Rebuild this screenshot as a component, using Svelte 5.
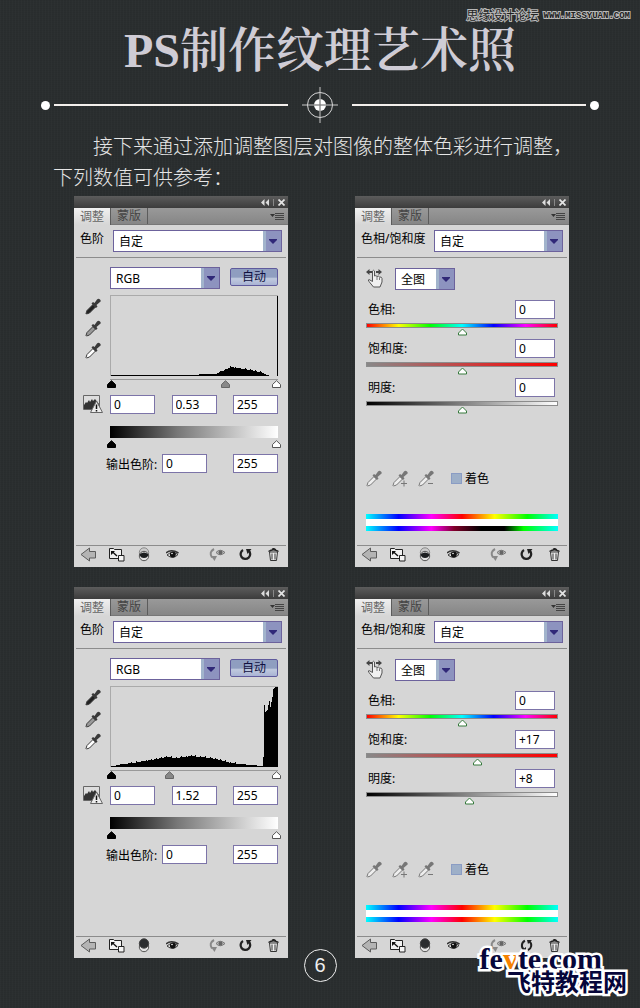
<script lang="ts">
  type Point = [number, number]

  let levels = $state([
    {
      id: 'levels-a', input: [0, 176, 255], gamma: '0.53', output: [0, 255], masked: false,
      curve: [[0, 1], [88, 1], [89, 2], [105, 2], [108, 3], [112, 5], [117, 7], [121, 9], [132, 7], [140, 6], [144, 5], [149, 4], [153, 3], [156, 1], [160, 0], [166, 0], [167, 80], [168, 80]] as Point[],
    },
    {
      id: 'levels-b', input: [0, 90, 255], gamma: '1.52', output: [0, 255], masked: true,
      curve: [[0, 1], [4, 1], [5, 2], [12, 3], [22, 4], [34, 6], [45, 8], [55, 10], [65, 9], [80, 11], [90, 10], [100, 9], [110, 7], [120, 4], [130, 3], [140, 2], [152, 1], [153, 10], [154, 62], [155, 55], [157, 57], [159, 66], [160, 60], [162, 70], [163, 78], [165, 80], [168, 80]] as Point[],
    },
  ])

  let hues = $state([
    { id: 'hue-a', masked: false, fields: [
      { name: '色相', kind: 'rainbow', value: 0, text: '0' },
      { name: '饱和度', kind: 'red', value: 0, text: '0' },
      { name: '明度', kind: 'grey', value: 0, text: '0' },
    ] },
    { id: 'hue-b', masked: true, fields: [
      { name: '色相', kind: 'rainbow', value: 0, text: '0' },
      { name: '饱和度', kind: 'red', value: 17, text: '+17' },
      { name: '明度', kind: 'grey', value: 8, text: '+8' },
    ] },
  ])

  // one-pixel columns with a little ripple where the curve has some body
  function histogram(points: Point[]) {
    let d = 'M0 80'
    for (let x = 0; x < 168; x++) {
      const i = points.findIndex((p) => p[0] > x)
      const [x0, y0] = points[i - 1]
      const [x1, y1] = points[i]
      let h = Math.round(y0 + ((y1 - y0) * (x - x0)) / (x1 - x0))
      if (h > 3 && h < 20) h += (x * 7) % 5 === 0 ? 1 : 0
      d += `V${80 - h}H${x + 1}`
    }
    return d + 'V80Z'
  }
</script>

{#snippet dropper(fill: string, body: string, mark = '')}
  <svg width="16" height="17" viewBox="0 0 16 17" aria-hidden="true">
    <path d="M1 15.5 2 12.5 8 6.5 10.500 9 4.500 15 1.500 16Z" fill={fill} stroke={body} />
    <path d="M6.500 5.500 8 4 9.500 5 12 1.500Q13.500 0 15 1.500T15 4L11.500 7 12.500 8.500 11 10Z" fill={body} />
    {#if mark}<path d={mark} stroke={body} fill="none" />{/if}
  </svg>
{/snippet}

{#snippet head()}
  <div class="titlebar">
    <button aria-label="collapse">
      <svg width="8" height="7" viewBox="0 0 8 7"><path d="M3.500 0V7L0 3.500ZM8 0V7L4.500 3.500Z" fill="#ddd" /></svg>
    </button>
    <span class="sep"></span>
    <button aria-label="close">
      <svg width="7" height="7" viewBox="0 0 7 7"><path d="M.5.5 6.500 6.500M6.500.5.5 6.500" stroke="#e4e4e4" stroke-width="1.700" /></svg>
    </button>
  </div>
  <div class="tabs">
    <button class="tab active">调整</button>
    <button class="tab">蒙版</button>
    <button class="menu" aria-label="menu">
      <svg width="14" height="9" viewBox="0 0 14 9"><path d="M0 2H5L2.500 5Z" fill="#333" /><path d="M5 1.500H14M5 3.500H14M5 5.500H14M5 7.500H14" stroke="#444" /></svg>
    </button>
  </div>
{/snippet}

{#snippet foot(masked: boolean, double: boolean)}
  <div class="foot">
    <button aria-label="back">
      <svg width="17" height="15" viewBox="0 0 17 15"><path d="M1 7.500 9.500 1V4.500H15.500V11H9.500V14Z" fill="#b4b4b4" stroke="#5c5c5c" /></svg>
    </button>
    <button aria-label="expand">
      <svg width="17" height="15" viewBox="0 0 17 15">
        <path d="M1.500 1.500H5.500L6.500 2.500H13.500V11.500H1.500Z" fill="#f2f2f2" stroke="#222" />
        <path d="M3 4H7L5.800 5.200 9.500 8.500 8.500 9.500 5 6.200 3 8Z" fill="#111" />
        <path d="M10.500 8.500H16V14H10.500Z" fill="#f4f4f4" stroke="#222" />
      </svg>
    </button>
    <button aria-label="clip">
      <svg width="12" height="15" viewBox="0 0 12 15">
        {#if masked}
          <circle cx="6" cy="9" r="4.700" fill="#e4e4e4" stroke="#555" />
          <circle cx="6" cy="5.500" r="4.700" fill="#2b2d2f" stroke="#444" />
        {:else}
          <circle cx="6" cy="5.500" r="4.700" fill="#ccc" stroke="#888" />
          <circle cx="6" cy="9" r="4.700" fill="#e4e4e4" stroke="#555" />
          <path d="M1.500 7.500Q6 3.500 10.500 7.500 9.500 11 6 11T1.500 7.500Z" fill="#1c1e20" />
        {/if}
      </svg>
    </button>
    <button aria-label="visibility">
      <svg width="13" height="11" viewBox="0 0 13 11">
        <path d="M0 4Q5-.5 12.500 4" stroke="#333" stroke-width="1.500" fill="none" />
        <path d="M1 6Q6 1.500 12 5.500 7 11 1 6Z" fill="#eee" stroke="#333" />
        <circle cx="6.800" cy="5.500" r="3" fill="#111" /><circle cx="6" cy="4.500" r=".8" fill="#fff" />
      </svg>
    </button>
    <span class="spring"></span>
    <button class="wide" aria-label="previous state">
      <svg width="17" height="14" viewBox="0 0 17 14">
        <path d="M5 1Q-.5 4 3 9.500" stroke="#888" stroke-width="2" fill="none" /><path d="M2 8H8L5.500 13Z" fill="#888" />
        <path d="M7 4.500Q11 0 16 4.500 11 9 7 4.500Z" fill="#bbb" stroke="#777" /><circle cx="11.500" cy="4.500" r="2" fill="#666" />
      </svg>
    </button>
    <button class="wide" aria-label="reset">
      <svg width="13" height="13" viewBox="0 0 13 13">
        {#if double}
          <path d="M5 1.800A5 5 0 0 0 4 10.500M8 11A5 5 0 0 0 9.500 2.500" stroke="#222" stroke-width="2" fill="none" /><path d="M1.500 11.500H6V8ZM7 1H12L8 5Z" fill="#222" />
        {:else}
          <path d="M4 2A4.800 4.800 0 1 0 9.500 2.500" stroke="#222" stroke-width="2.300" fill="none" /><path d="M7 1H12.500L8.500 6Z" fill="#222" />
        {/if}
      </svg>
    </button>
    <button class="wide" aria-label="delete">
      <svg width="11" height="13" viewBox="0 0 11 13">
        <path d="M1.500 4H9.500L8.500 12.500H2.500Z" fill="#eee" stroke="#333" /><path d="M4 5.500V11.500M7 5.500V11.500" stroke="#333" />
        <path d="M.5 3.500Q5.500 0 10.500 3.500M4 1.500 5.500.5 8 2" stroke="#222" stroke-width="1.500" fill="none" />
      </svg>
    </button>
  </div>
{/snippet}

{#snippet levelsPanel(p)}
  <section class="panel">
    {@render head()}
    <div class="preset">
      <label for="{p.id}-preset">色阶</label>
      <select id="{p.id}-preset"><option>自定</option></select>
    </div>
    <div class="body levels">
      <div></div>
      <div class="between">
        <select class="channel" aria-label="channel"><option>RGB</option></select>
        <button class="auto">自动</button>
      </div>

      <div class="droppers">
        {@render dropper('#222', '#3a3a3a')}
        {@render dropper('#999', '#3a3a3a')}
        {@render dropper('#fff', '#3a3a3a')}
      </div>
      <div class="graph">
        <svg class="histogram" viewBox="0 0 168 80" preserveAspectRatio="none" shape-rendering="crispEdges">
          <path d={histogram(p.curve)} />
        </svg>
        <div class="stops lined">
          <input class="stop black" type="range" max="255" aria-label="shadows" bind:value={p.input[0]} />
          <input class="stop mid" type="range" max="255" aria-label="midtones" bind:value={p.input[1]} />
          <input class="stop white" type="range" max="255" aria-label="highlights" bind:value={p.input[2]} />
        </div>
      </div>

      <svg class="warn" width="20" height="19" viewBox="0 0 20 19" aria-hidden="true">
        <path d="M.5.5H16.500V14.500H.5Z" fill="#ddd" stroke="#666" />
        <path d="M1 14V10L3 7 4 8 6 5 7 7 9 4 10 6 12 4 16 9V14Z" fill="#333" />
        <path d="M13.500 6 19.500 17.500H7.500Z" fill="#eee" stroke="#666" /><path d="M13.500 9.500V14M13.500 15V16.500" stroke="#111" stroke-width="1.500" />
      </svg>
      <div class="between numbers">
        <input type="text" aria-label="shadow input" bind:value={p.input[0]} />
        <input type="text" aria-label="gamma" bind:value={p.gamma} />
        <input type="text" aria-label="highlight input" bind:value={p.input[2]} />
      </div>

      <div></div>
      <div class="ramp-box">
        <div class="ramp"></div>
        <div class="stops">
          <input class="stop black" type="range" max="255" aria-label="output black" bind:value={p.output[0]} />
          <input class="stop white" type="range" max="255" aria-label="output white" bind:value={p.output[1]} />
        </div>
      </div>

      <div class="output">
        <label for="{p.id}-out">输出色阶:</label>
        <input id="{p.id}-out" type="text" bind:value={p.output[0]} />
        <span class="spring"></span>
        <input type="text" aria-label="output highlight" bind:value={p.output[1]} />
      </div>
    </div>
    {@render foot(p.masked, false)}
  </section>
{/snippet}

{#snippet huePanel(p)}
  <section class="panel">
    {@render head()}
    <div class="preset hue-preset">
      <label for="{p.id}-preset">色相/饱和度</label>
      <select id="{p.id}-preset"><option>自定</option></select>
    </div>
    <div class="body hue">
      <div class="range-row">
        <svg width="18" height="20" viewBox="0 0 18 20" aria-hidden="true">
          <path d="M0 4 3.500 1V3H6V5H3.500V7ZM16 4 12.500 1V3H10V5H12.500V7Z" fill="#444" />
          <path d="M6.500 11V3Q7.500 1.500 8.500 3V8Q10 7 11 8.500 12.500 7.500 13.500 9 15.500 8.500 16 10.500V14L14 19H7.500L3 13.500Q1.500 11.500 3 11.500L6.500 13.500Z" fill="#f0f0f0" stroke="#555" />
          <path d="M11 9V12M13.500 9.500V12" stroke="#777" />
        </svg>
        <select class="scope" aria-label="range"><option>全图</option></select>
      </div>
      {#each p.fields as f}
        <div class="field">
          <div class="between">
            <label for="{p.id}-{f.kind}">{f.name}:</label>
            <input id="{p.id}-{f.kind}" type="text" bind:value={f.text} />
          </div>
          <input class="slider {f.kind}" type="range" min="-100" max="100" aria-label={f.name} bind:value={f.value} />
        </div>
      {/each}
      <div class="tools">
        {@render dropper('#eee', '#777')}
        {@render dropper('#eee', '#777', 'M9 13.500H15M12 10.500V16.500')}
        {@render dropper('#eee', '#777', 'M10 13.500H15')}
        <label class="tint"><input type="checkbox" />着色</label>
      </div>
      <div class="spectrum"></div>
      <div class="spectrum second" class:dark={!p.masked}></div>
    </div>
    {@render foot(p.masked, p.masked)}
  </section>
{/snippet}

<main>
  <div class="forum"><span>思缘设计论坛</span> <small>WWW.MISSYUAN.COM</small></div>
  <h1>PS制作纹理艺术照</h1>
  <div class="rule">
    <i></i><b></b>
    <svg width="36" height="36" viewBox="0 0 36 36" aria-hidden="true">
      <circle cx="18" cy="18" r="12.500" fill="none" stroke="#d8d8d8" />
      <circle cx="18" cy="18" r="6" fill="#fff" />
      <path d="M18 0V36M0 18H36" stroke="#c8c8c8" />
      <path d="M18 12V24M12 18H24" stroke="#777" />
    </svg>
    <b></b><i></i>
  </div>
  <p>接下来通过添加调整图层对图像的整体色彩进行调整，下列数值可供参考：</p>

  <div class="panels">
    {#each levels as level, i}
      {@render levelsPanel(level)}
      {@render huePanel(hues[i])}
    {/each}
  </div>

  <div class="page">6</div>
  <div class="site">
    <div class="domain">fe<em>v</em>te.com</div>
    <div>飞特教程网</div>
  </div>
</main>

<style>
  :global(body) { background: #292d2e; }
  main {
    position: relative; overflow: hidden; padding-bottom: 26px;
    font-family: "Noto Sans", "Noto Sans CJK SC", sans-serif; font-size: 12px; color: #000;
    background: repeating-linear-gradient(90deg, #ffffff04 0 1px, transparent 1px 3px), repeating-linear-gradient(#0000000a 0 1px, transparent 1px 2px), #2a2e2f;
  }
  button { padding: 0; border: 0; background: none; font: inherit; cursor: pointer; }
  svg { display: block; flex: none; }
  input, select { box-sizing: border-box; margin: 0; font: inherit; color: #000; }

  h1 { margin: 0; padding-top: 16px; text-align: center; font: 600 48px/70px "Liberation Serif", "Noto Serif CJK SC", "Noto Sans CJK SC", serif; color: #cfccd5; }
  .rule { display: flex; align-items: center; gap: 4px; padding: 1px 41px 0; }
  .rule i { width: 9px; height: 9px; border-radius: 50%; background: #fff; }
  .rule b { flex: 1; height: 2px; background: #f3efec; }
  .rule svg { margin: 0 10px; }
  p { margin: 0; padding: 7px 60px 0 53px; text-indent: 2em; font: 300 20px/31px "Noto Sans CJK SC", sans-serif; color: #e6e6e6; }

  .panels { display: grid; grid-template-columns: 1fr 1fr; gap: 20px 67px; padding: 4px 71px 0 74px; }
  .panel { display: flex; flex-direction: column; background: #d6d6d6; }
  .titlebar { display: flex; align-items: center; justify-content: flex-end; gap: 4px; height: 12px; padding-right: 3px; background: linear-gradient(#5c5c5c, #3c3c3c); }
  .sep { width: 1px; height: 7px; background: #888; }
  .tabs { display: flex; height: 17px; background: linear-gradient(#999, #868686); border-bottom: 1px solid #777; box-sizing: border-box; }
  .tab { width: 37px; line-height: 16px; border-right: 1px solid #5c5c5c; color: #444; box-sizing: border-box; }
  .tab.active { height: 17px; background: linear-gradient(#f0f0f0, #d6d6d6); color: #666; }
  .menu { margin: 0 4px 0 auto; }

  .preset { display: flex; align-items: center; margin: 5px 2px 0; padding: 0 4px 5px; border-bottom: 1px solid #8c8c8c; }
  .preset label { width: 33px; line-height: 18px; align-self: flex-start; }
  .hue-preset label { width: 73px; }
  .preset select { flex: 1; min-width: 0; }
  select {
    height: 22px; padding: 0 20px 0 5px; appearance: none; border: 1px solid #6c629c; border-radius: 0;
    background:
      url("data:image/svg+xml,%3Csvg xmlns='http://www.w3.org/2000/svg' width='8' height='5'%3E%3Cpath d='M0 0H8V1L4 5 0 1Z' fill='%23302878'/%3E%3C/svg%3E") right 4px center no-repeat,
      linear-gradient(#8d93bf, #8d93bf) right / 15px 100% no-repeat,
      linear-gradient(#a2b4cc, #a2b4cc) right / 18px 100% no-repeat, #fff;
  }
  input[type='text'] { width: 45px; height: 19px; padding: 0 3px; border: 1px solid #7c74a8; background: #fff; }
  .between { display: flex; justify-content: space-between; }
  .spring { flex: 1; }

  .body { flex: 1; }
  .levels { display: grid; grid-template-columns: 27px 1fr; align-content: start; padding: 9px 10px 72px 9px; }
  .channel { width: 110px; }
  .auto { width: 48px; height: 18px; margin-top: 1px; border: 1px solid #5f5a9c; border-radius: 2px; line-height: 14px; background: linear-gradient(#8f9ec0 50%, #c0cade 60%, #a9b3d4); color: #101040; }
  .droppers { display: grid; align-content: start; gap: 5px; padding: 9px 2px; }
  .graph { margin-top: 6px; }
  .histogram { width: 100%; height: 81px; border: 1px solid #aaa; border-width: 1px 0 0 1px; box-sizing: border-box; }
  .stops { display: grid; margin: 1px -3px 0; }
  .lined { margin-top: 3px; background: linear-gradient(#999, #999) center top / calc(100% - 6px) 1px no-repeat; }
  .stop { grid-area: 1 / 1; width: 100%; height: 9px; appearance: none; background: none; pointer-events: none; }
  .stop::-webkit-slider-thumb { width: 9px; height: 9px; appearance: none; pointer-events: auto; background: no-repeat center bottom; }
  .black::-webkit-slider-thumb { background-image: url("data:image/svg+xml,%3Csvg xmlns='http://www.w3.org/2000/svg' width='9' height='8'%3E%3Cpath d='M4.500 .7 8.500 4.500V7.500H.5V4.500Z' fill='%23000' stroke='%23000'/%3E%3C/svg%3E"); }
  .mid::-webkit-slider-thumb { background-image: url("data:image/svg+xml,%3Csvg xmlns='http://www.w3.org/2000/svg' width='9' height='8'%3E%3Cpath d='M4.500 .7 8.500 4.500V7.500H.5V4.500Z' fill='%23888' stroke='%23666'/%3E%3C/svg%3E"); }
  .white::-webkit-slider-thumb { background-image: url("data:image/svg+xml,%3Csvg xmlns='http://www.w3.org/2000/svg' width='9' height='8'%3E%3Cpath d='M4.500 .7 8.500 4.500V7.500H.5V4.500Z' fill='%23fff' stroke='%23555'/%3E%3C/svg%3E"); }
  .warn, .numbers { margin-top: 7px; }
  .ramp-box { margin-top: 12px; }
  .ramp { height: 12px; background: linear-gradient(90deg, #000, #777 40%, #fff); }
  .output { grid-column: 1 / 3; display: flex; align-items: center; margin-top: 6px; padding-left: 23px; }
  .output label { width: 56px; white-space: nowrap; }

  .hue { padding: 10px 11px 14px; }
  .range-row { display: flex; gap: 11px; margin-bottom: 10px; }
  .scope { width: 60px; }
  .field { margin-bottom: 3px; }
  .field .between { padding: 0 3px 0 2px; }
  .field label { line-height: 19px; }
  .field input[type='text'] { width: 40px; }
  .slider { display: block; width: 100%; height: 13px; margin-top: 4px; appearance: none; background: linear-gradient(90deg, var(--ramp)) 1px 1px / calc(100% - 2px) 3px no-repeat, linear-gradient(#8c8c8c, #8c8c8c) 0 0 / 100% 5px no-repeat; }
  .slider::-webkit-slider-runnable-track { height: 13px; }
  .slider::-webkit-slider-thumb { width: 9px; height: 8px; margin-top: 5px; appearance: none; background: url("data:image/svg+xml,%3Csvg xmlns='http://www.w3.org/2000/svg' width='9' height='8'%3E%3Cpath d='M4.500 1 8.500 5V7H.5V5Z' fill='%23fff' stroke='%23367a3c'/%3E%3C/svg%3E") no-repeat; }
  .rainbow { --ramp: #f00, #ff0, #0f0, #0ff, #00f, #f0f, #f00; }
  .red { --ramp: #888, #f00; }
  .grey { --ramp: #000, #fff; }
  .tools { display: flex; align-items: center; gap: 10px; margin-top: 56px; }
  .tint { display: flex; align-items: center; gap: 3px; margin-left: 7px; line-height: 16px; }
  .tint input { width: 11px; height: 11px; appearance: none; border: 1px solid #8a9cc4; background: #9dafc8; }
  .spectrum { height: 5px; margin-top: 27px; background: linear-gradient(90deg, #0ff, #00f 17%, #f0f 34%, #f00 50%, #ff0 67%, #0f0 84%, #0ff); }
  .second { margin-top: 0; border-top: 7px solid #fff; }
  .dark { background: linear-gradient(90deg, #0ff, #00f 17%, #f0f 34%, #80002a 46%, #000 60%, #000 72%, #0f0 82%, #0ff); }

  .foot { display: flex; height: 17px; margin: 0 1px 0 0; padding: 0 0 4px; background: linear-gradient(#8c8c8c, #8c8c8c) 2px 0 / calc(100% - 3px) 1px no-repeat; border-top: 0; padding-top: 1px; }
  .foot button { display: grid; place-items: center; width: 28px; }
  .foot .wide { width: 28px; }

  .page { display: grid; place-items: center; box-sizing: border-box; width: 33px; height: 33px; margin: -9px auto 0; border: 1px solid #eee; border-radius: 50%; font: 20px "Liberation Sans", sans-serif; color: #eee; }
  .forum { position: absolute; top: 8px; right: 10px; display: flex; align-items: center; gap: 5px; line-height: 16px; color: #222; -webkit-text-stroke: 2px #b8b8b8; paint-order: stroke fill; }
  .forum small { font: bold 9px/16px "Liberation Mono", monospace; }
  .site { position: absolute; right: 13px; bottom: 15px; text-align: right; font: bold 24px/24px "Noto Sans CJK SC", sans-serif; color: #06063a; -webkit-text-stroke: 5px #fff; paint-order: stroke fill; stroke-linejoin: round; }
  .domain { padding-right: 25px; font: bold 30px/20px "Liberation Serif", serif; }
  .domain em { font-style: normal; color: #f58200; }
</style>
